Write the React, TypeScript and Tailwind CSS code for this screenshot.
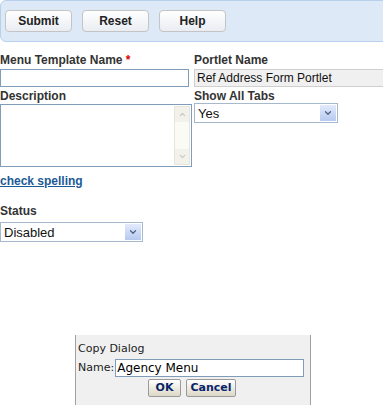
import { ChevronDown, ChevronUp } from 'lucide-react'

function ToolButton({ label }: { label: string }) {
  return (
    <button className="h-[22px] w-[67px] rounded-[4px] border border-[#c4c4c4] bg-gradient-to-b from-white to-[#e9edf2] text-[12px] font-bold text-[#222]">
      {label}
    </button>
  )
}

function SelectBox({ value, width }: { value: string; width: string }) {
  return (
    <div className={`flex h-[20px] items-center border border-[#a5b8cc] bg-white ${width}`}>
      <span className="flex-1 pl-[3px] text-[13px] leading-none text-[#111]">{value}</span>
      <span className="mr-[1px] flex h-[16px] w-[16px] items-center justify-center bg-gradient-to-b from-[#e3ebfb] to-[#b7c9f0]">
        <ChevronDown size={10} strokeWidth={3} className="text-[#4d6185]" />
      </span>
    </div>
  )
}

function DialogButton({ label, width }: { label: string; width: string }) {
  return (
    <button className={`h-[18px] rounded-[2px] border border-[#9a9a9a] bg-gradient-to-b from-white to-[#ddd8c6] text-[11px] font-bold text-[#0a246a] ${width}`}>
      {label}
    </button>
  )
}

export default function App() {
  return (
    <div className="h-[405px] w-[383px] overflow-hidden bg-white font-['Liberation_Sans',Arial,sans-serif] text-[#333]">
      {/* toolbar */}
      <div className="flex h-[42px] w-[395px] items-center gap-[10px] rounded-[6px] border border-[#b9d0ec] bg-[#dde9f6] pl-[4px]">
        <ToolButton label="Submit" />
        <ToolButton label="Reset" />
        <ToolButton label="Help" />
      </div>

      <div className="mt-[11px] grid grid-cols-[194px_189px]">
        <div>
          <div className="text-[12px] font-bold leading-[14px]">
            Menu Template Name <span className="text-[#d00]">*</span>
          </div>
          <div className="mt-[2px] h-[18px] w-[189px] border border-[#7f9db9] bg-white" />
        </div>
        <div>
          <div className="text-[12px] font-bold leading-[14px]">Portlet Name</div>
          <div className="mt-[2px] flex h-[18px] w-[190px] items-center border border-[#cfcfcf] bg-[#f0f0f0] pl-[2px] text-[12px] text-[#111]">
            Ref Address Form Portlet
          </div>
        </div>

        <div className="mt-[2px]">
          <div className="text-[12px] font-bold leading-[14px]">Description</div>
          <div className="mt-[1px] flex h-[63px] w-[192px] border border-[#7f9db9] bg-white">
            <div className="flex-1" />
            <div className="my-[1px] mr-[1px] flex w-[16px] flex-col justify-between border border-[#e6e6dc] bg-[#fbfbf5]">
              <div className="flex h-[15px] items-center justify-center bg-[#f2f2ea]">
                <ChevronUp size={9} strokeWidth={3} className="text-[#c8c8c0]" />
              </div>
              <div className="flex h-[15px] items-center justify-center bg-[#f2f2ea]">
                <ChevronDown size={9} strokeWidth={3} className="text-[#c8c8c0]" />
              </div>
            </div>
          </div>
        </div>
        <div className="mt-[2px]">
          <div className="text-[12px] font-bold leading-[14px]">Show All Tabs</div>
          <div>
            <SelectBox value="Yes" width="w-[144px]" />
          </div>
        </div>
      </div>

      <a className="mt-[7px] block text-[12px] font-bold leading-[14px] text-[#1c5a96] underline">check spelling</a>

      <div className="mt-[16px] text-[12px] font-bold leading-[14px]">Status</div>
      <div className="mt-[4px]">
        <SelectBox value="Disabled" width="w-[143px]" />
      </div>

      {/* copy dialog */}
      <div className="ml-[75px] mt-[93px] h-[80px] w-[236px] border-x border-[#a0a0a0] bg-[#f0f0f0] pl-[2px] pt-[7px] font-['DejaVu_Sans',sans-serif] text-[11px] text-[#222]">
        <div className="leading-[14px]">Copy Dialog</div>
        <div className="mt-[3px] flex items-center">
          <span>Name:</span>
          <div className="ml-[1px] flex h-[18px] w-[189px] items-center border border-[#7f9db9] bg-white pl-[1px] text-[12px] text-[#000]">
            Agency Menu
          </div>
        </div>
        <div className="mt-[2px] flex justify-center gap-[5px] pr-[4px]">
          <DialogButton label="OK" width="w-[33px]" />
          <DialogButton label="Cancel" width="w-[50px]" />
        </div>
      </div>
    </div>
  )
}
